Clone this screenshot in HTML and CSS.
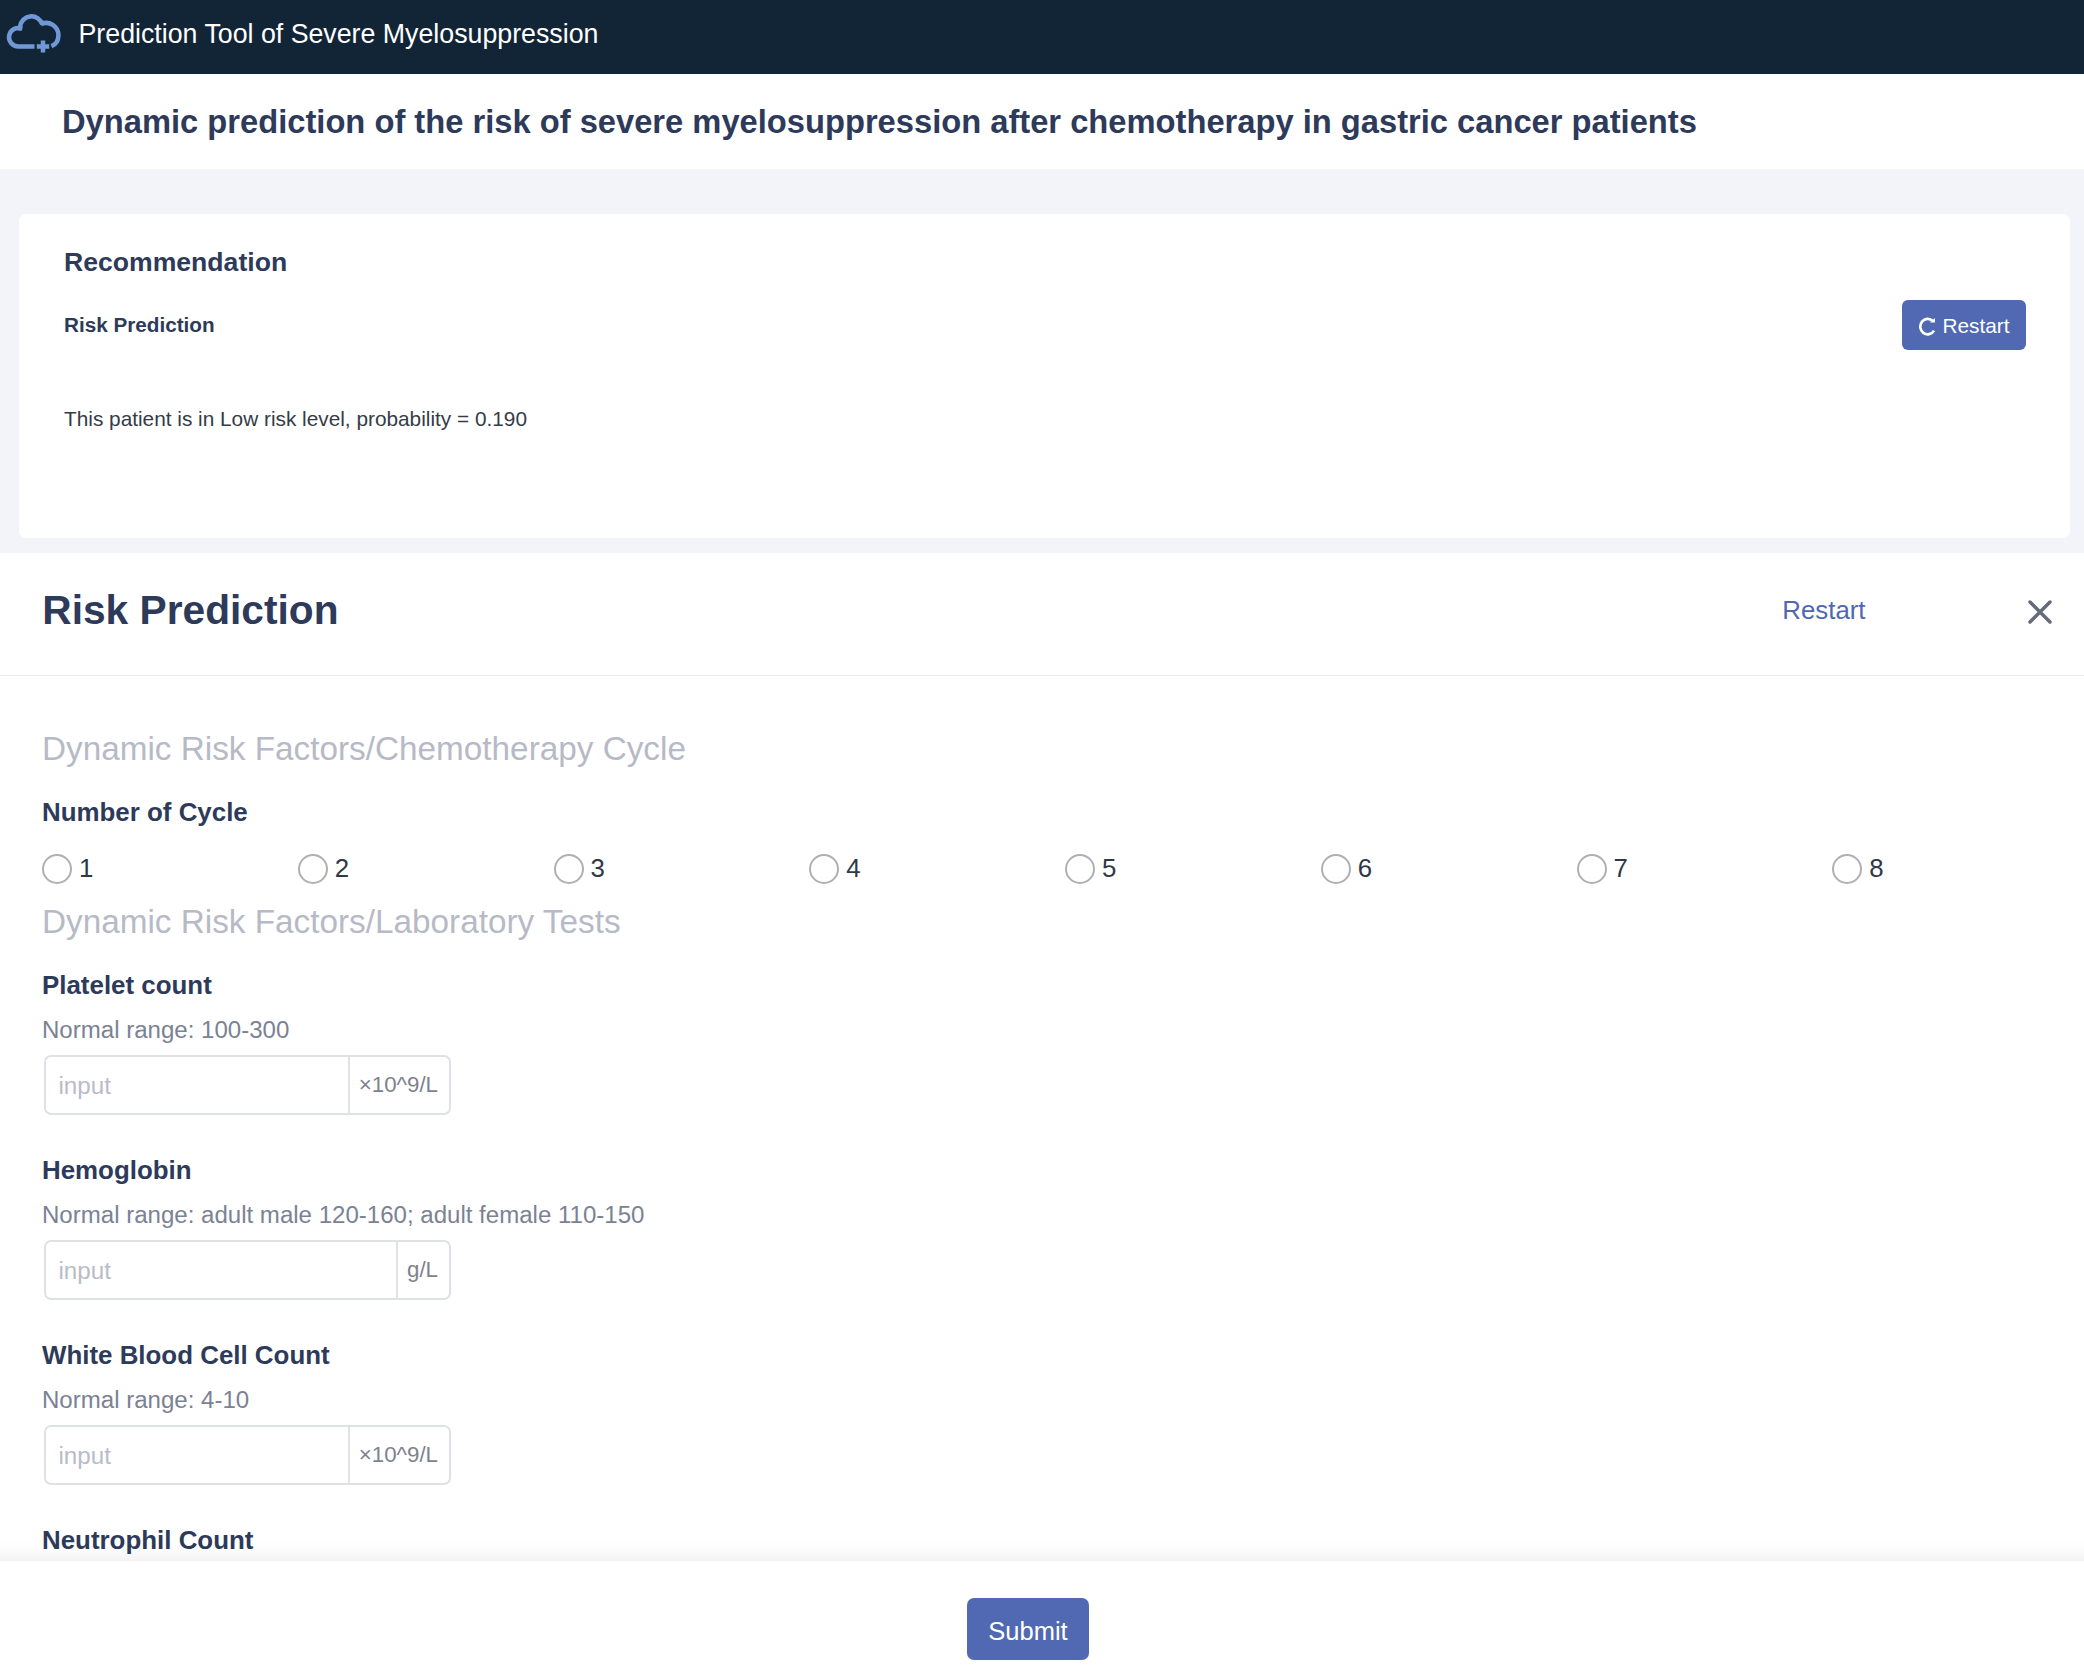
FILE: index.html
```
<!DOCTYPE html>
<html lang="en">
<head>
<meta charset="utf-8">
<title>Prediction Tool of Severe Myelosuppression</title>
<link rel="stylesheet" href="styles.css">
</head>
<body>
<header class="topbar">
  <svg class="logo" viewBox="0 0 68 68" fill="none" stroke="#7198d6" stroke-width="4.5">
    <path d="M34.5 46.4H18.7a9.3 9.2 0 1 1 3.4-17.6"/>
    <path d="M19.9 30.4V27a11.6 11.8 0 0 1 22.6-2.4"/>
    <path d="M41 24.1A12.3 12.3 0 0 1 58.4 35.4C58.4 41.5 55.4 44.6 51.4 46.2"/>
    <path d="M36.8 46.6h12.4M43 40.6v12"/>
  </svg>
  <span class="brand">Prediction Tool of Severe Myelosuppression</span>
</header>
<div class="title-bar"><h1 class="page-title">Dynamic prediction of the risk of severe myelosuppression after chemotherapy in gastric cancer patients</h1></div>
<main class="backdrop">
  <section class="card">
    <h2 class="card-title">Recommendation</h2>
    <div class="card-row">
      <h3 class="card-subtitle">Risk Prediction</h3>
      <button class="restart-button">
        <svg class="restart-icon" viewBox="0 0 18 20" fill="none" stroke="#fff" stroke-width="2.7"><path d="M16 14.6A7.4 7.7 0 1 1 14.8 5"/><path d="M17 2V6.4H12Z" fill="#fff" stroke="none"/></svg>
        <span>Restart</span>
      </button>
    </div>
    <p class="card-text">This patient is in Low risk level, probability = 0.190</p>
  </section>
</main>
<section class="drawer">
  <div class="drawer-head">
    <h2 class="drawer-title">Risk Prediction</h2>
    <a class="restart-link">Restart</a>
    <svg class="close" viewBox="0 0 26 26" fill="none" stroke="#666b7a" stroke-width="3.5" stroke-linecap="round"><path d="M3 3l20 20M23 3L3 23"/></svg>
  </div>
  <div class="drawer-body">
    <h3 class="section-title">Dynamic Risk Factors/Chemotherapy Cycle</h3>
    <h4 class="label cycle-label">Number of Cycle</h4>
    <div class="radios">
      <label class="radio"><i class="dot"></i>1</label>
      <label class="radio"><i class="dot"></i>2</label>
      <label class="radio"><i class="dot"></i>3</label>
      <label class="radio"><i class="dot"></i>4</label>
      <label class="radio"><i class="dot"></i>5</label>
      <label class="radio"><i class="dot"></i>6</label>
      <label class="radio"><i class="dot"></i>7</label>
      <label class="radio"><i class="dot"></i>8</label>
    </div>
    <h3 class="section-title">Dynamic Risk Factors/Laboratory Tests</h3>
    <div class="fields">
      <div class="field">
        <h4 class="label">Platelet count</h4>
        <p class="hint">Normal range: 100-300</p>
        <div class="input-box"><input class="input" placeholder="input"><span class="unit">×10^9/L</span></div>
      </div>
      <div class="field">
        <h4 class="label">Hemoglobin</h4>
        <p class="hint">Normal range: adult male 120-160; adult female 110-150</p>
        <div class="input-box"><input class="input" placeholder="input"><span class="unit">g/L</span></div>
      </div>
      <div class="field">
        <h4 class="label">White Blood Cell Count</h4>
        <p class="hint">Normal range: 4-10</p>
        <div class="input-box"><input class="input" placeholder="input"><span class="unit">×10^9/L</span></div>
      </div>
      <div class="field">
        <h4 class="label">Neutrophil Count</h4>
      </div>
    </div>
  </div>
  <footer class="drawer-foot"><button class="submit">Submit</button></footer>
</section>
</body>
</html>
```
FILE: styles.css
```
* { box-sizing: border-box; margin: 0; padding: 0; }
body {
  display: flex;
  flex-direction: column;
  height: 1679px;
  overflow: hidden;
  background: #fff;
  color: #2d3a5a;
  font-family: "Liberation Sans", Arial, sans-serif;
}
button, input { font-family: inherit; border: 0; background: none; }

.topbar {
  display: flex;
  align-items: center;
  gap: 10.5px;
  height: 74px;
  padding-bottom: 6px;
  background: #122536;
}
.logo { width: 68px; height: 68px; }
.brand { color: #fff; font-size: 26.75px; line-height: 68px; }

.title-bar { height: 95px; padding-left: 62px; }
.page-title { font-size: 32.7px; line-height: 95px; white-space: nowrap; }

.backdrop { height: 384px; padding: 45px 14px 15px 19px; background: #f3f4fa; }
.card { height: 324px; padding: 30px 44.5px 0 45px; border-radius: 7px; background: #fff; }
.card-title { font-size: 26.6px; line-height: 36px; }
.card-row { display: flex; align-items: center; justify-content: space-between; height: 50px; margin-top: 20px; }
.card-subtitle { font-size: 20.7px; line-height: 50px; }
.restart-button {
  display: flex;
  align-items: center;
  gap: 7px;
  width: 124px;
  height: 50px;
  padding: 1px 0 0 16px;
  border-radius: 6px;
  background: #5069b2;
  color: #fff;
  font-size: 20.8px;
}
.restart-icon { width: 18px; height: 20px; }
.card-text { margin-top: 54px; color: #343c47; font-size: 20.8px; line-height: 30px; }

.drawer { display: flex; flex-direction: column; height: 1126px; }
.drawer-head {
  display: flex;
  align-items: center;
  height: 123px;
  padding: 0 31px 8px 42.3px;
  border-bottom: 1px solid #ebebed;
}
.drawer-title { flex: 1; font-size: 40.7px; line-height: 114px; }
.restart-link { color: #4f68b3; font-size: 25.8px; line-height: 114px; }
.close { width: 26px; height: 26px; margin: 4px 0 0 161.5px; }

.drawer-body { height: 885px; padding: 51px 0 0 42px; overflow: hidden; }
.section-title { color: #b7bac6; font-size: 33.3px; font-weight: 400; line-height: 44px; }
.label { font-size: 25.9px; line-height: 36px; }
.cycle-label { margin-top: 23px; }
.radios { display: grid; grid-template-columns: repeat(8, 255.75px); margin: 24px 0 16px; }
.radio { display: flex; align-items: center; gap: 7px; height: 30px; padding-bottom: 2px; color: #303845; font-size: 25.8px; line-height: 28px; }
.dot { width: 30px; height: 30px; margin: 0 0 -2px; border: 2px solid #b0b0b0; border-radius: 50%; }
.fields { display: flex; flex-direction: column; gap: 37px; margin-top: 23px; }
.hint { margin: 12px 0 10px; color: #7a8294; font-size: 24.05px; line-height: 30px; }
.input-box {
  display: flex;
  width: 407px;
  height: 60px;
  margin-left: 2px;
  border: 2px solid #dee2e6;
  border-radius: 7px;
}
.input { flex: 1; min-width: 0; padding: 2px 0 0 12.5px; color: #303845; font-size: 24.2px; }
.input::placeholder { color: #b9bcc8; opacity: 1; }
.unit { padding: 0 11px 0 9px; border-left: 2px solid #e0e2e6; color: #7e828e; font-size: 22.3px; line-height: 56px; }

/* The bar runs past both edges so its shadow stays even across the page. */
.drawer-foot {
  position: relative;
  display: flex;
  justify-content: center;
  height: 118px;
  margin: 0 -40px;
  padding: 37px 28px 0 0;
  background: #fff;
  box-shadow: 0 0 20px rgba(0, 0, 0, 0.1);
}
.submit { width: 122px; height: 62px; padding-top: 4px; border-radius: 7px; background: #5069b2; color: #fff; font-size: 25.5px; }
```
